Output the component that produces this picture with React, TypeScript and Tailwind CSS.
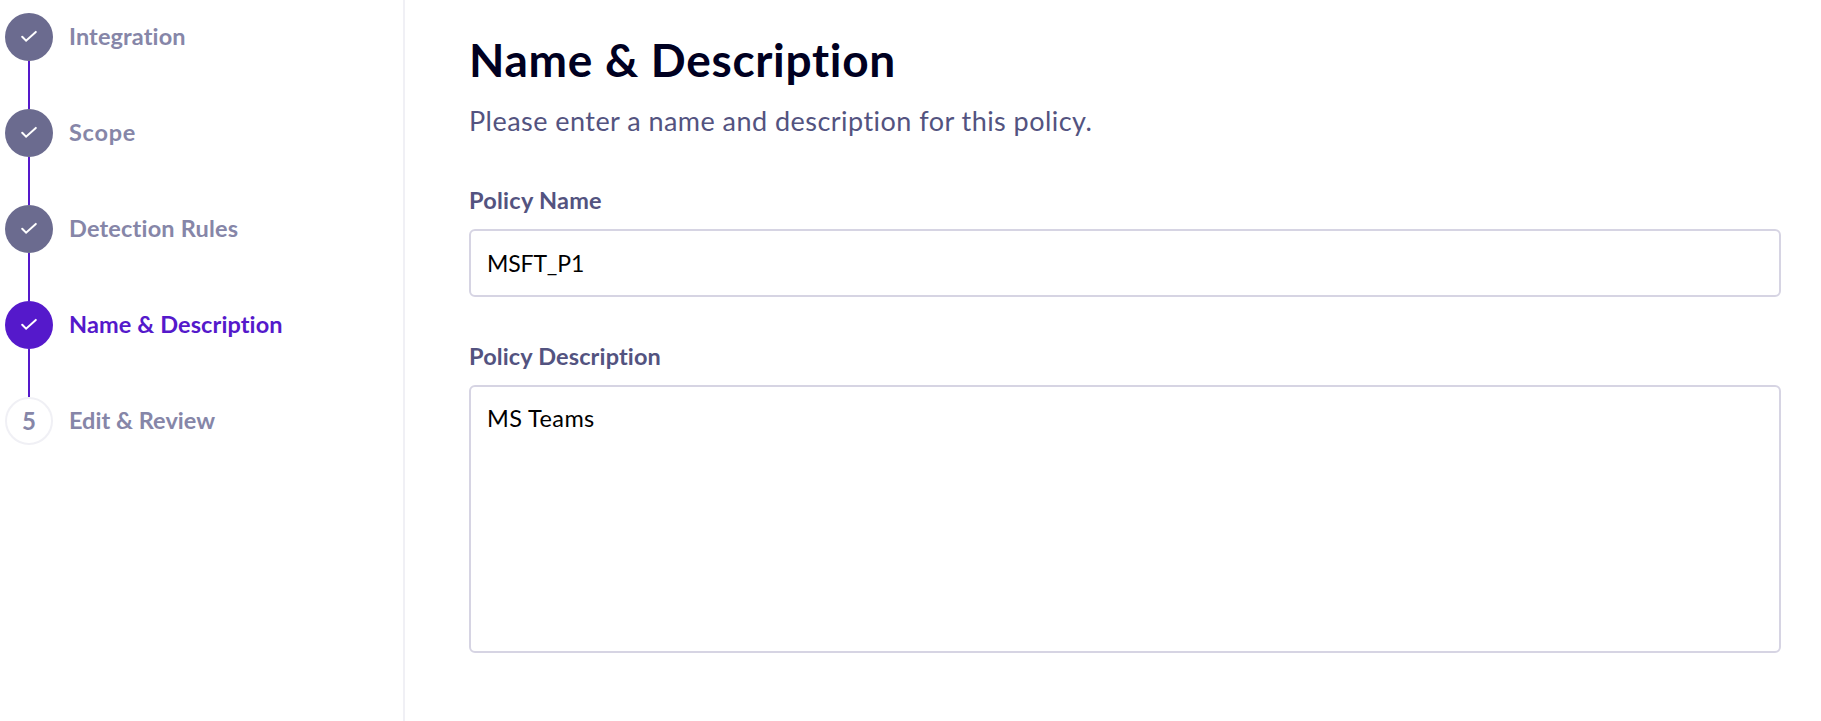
type Step = { label: string; state: "done" | "active" | "pending"; tracking: string };

const steps: Step[] = [
  { label: "Integration", state: "done", tracking: "tracking-[0.12px]" },
  { label: "Scope", state: "done", tracking: "tracking-[0.75px]" },
  { label: "Detection Rules", state: "done", tracking: "tracking-[0.18px]" },
  { label: "Name & Description", state: "active", tracking: "tracking-[0.11px]" },
  { label: "Edit & Review", state: "pending", tracking: "tracking-[0.03px]" },
];

const circleStyles = {
  done: "bg-[#6b6b8f]",
  active: "bg-[#5519cb]",
  pending: "border-2 border-[#f0f0f5] bg-white text-[#8686a8]",
};

function Check() {
  return (
    <svg width="20" height="20" viewBox="0 0 20 20" fill="none" aria-hidden="true">
      <path d="M3.2 9.7 L7.1 13.7 L16.8 4.9" stroke="white" strokeWidth="2" strokeLinecap="round" strokeLinejoin="miter" />
    </svg>
  );
}

function Stepper() {
  return (
    <ol className="flex flex-col pt-[13px] pl-[5px]">
      {steps.map((step, i) => (
        <li key={step.label} className="flex flex-col">
          <div className="flex h-12 items-center gap-4">
            <div className={`flex size-12 shrink-0 items-center justify-center rounded-full pb-px text-2xl font-bold ${circleStyles[step.state]}`}>
              {step.state === "pending" ? i + 1 : <Check />}
            </div>
            <span
              className={`pb-0.5 text-[23.5px] leading-[46px] font-bold whitespace-nowrap ${step.tracking} ${
                step.state === "active" ? "text-[#5519cb]" : "text-[#8686a8]"
              }`}
            >
              {step.label}
            </span>
          </div>
          {i < steps.length - 1 && <div className="ml-[23px] h-12 w-0.5 bg-[#5519cb]" />}
        </li>
      ))}
    </ol>
  );
}

export default function App() {
  return (
    <div className="flex h-[721px] w-[1821px] overflow-hidden bg-white font-['Lato',sans-serif]">
      <aside className="w-[405px] shrink-0 border-r-2 border-[#f0f0f5]">
        <Stepper />
      </aside>
      <main className="flex flex-1 flex-col pt-8 pr-10 pl-16">
        <h1 className="h-14 text-[46px] leading-14 font-bold tracking-[0.7px] whitespace-nowrap text-[#000021]">
          Name &amp; Description
        </h1>
        <p className="mt-[15px] h-9 text-[27px] leading-9 tracking-[0.46px] whitespace-nowrap text-[#535380]">
          Please enter a name and description for this policy.
        </p>
        <label htmlFor="policy-name" className="mt-[45px] h-8 text-[23.5px] leading-8 font-bold tracking-[0.25px] text-[#535380]">
          Policy Name
        </label>
        <input
          id="policy-name"
          defaultValue="MSFT_P1"
          className="mt-[13px] h-[68px] w-full rounded-md border-2 border-[#d6d4e3] px-4 text-[23px] tracking-[-0.15px] text-black outline-none"
        />
        <label htmlFor="policy-description" className="mt-[43px] h-8 text-[23.5px] leading-8 font-bold tracking-[0.14px] text-[#535380]">
          Policy Description
        </label>
        <textarea
          id="policy-description"
          defaultValue="MS Teams"
          className="mt-[13px] h-[268px] w-full resize-none rounded-md border-2 border-[#d6d4e3] px-4 py-[15px] text-[23.5px] leading-8 tracking-[0.4px] text-black outline-none"
        />
      </main>
    </div>
  );
}
